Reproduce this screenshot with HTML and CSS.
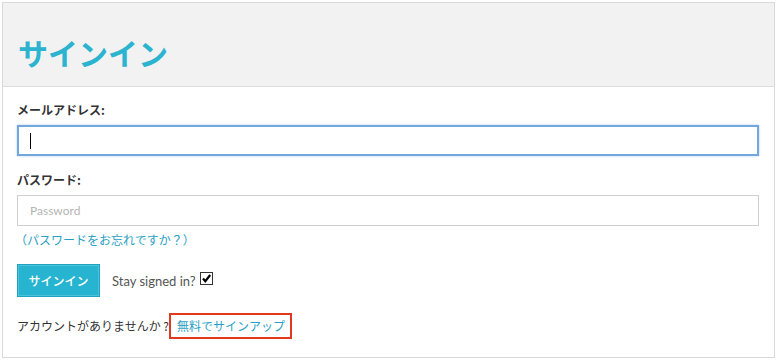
FILE: index.html
```html
<!DOCTYPE html>
<html lang="ja">
<head>
<meta charset="utf-8">
<title>サインイン</title>
<link rel="stylesheet" href="styles.css">
</head>
<body>
<div class="panel">
  <div class="panel-head">
    <h1 class="title">サインイン</h1>
  </div>
  <div class="panel-body">
    <div class="label label-first">メールアドレス:</div>
    <div class="input input-focus"><span class="caret"></span></div>
    <div class="label label-second">パスワード:</div>
    <div class="input"><span class="placeholder">Password</span></div>
    <div class="forgot"><a class="link" href="#">（パスワードをお忘れですか？）</a></div>
    <div class="actions">
      <button class="btn" type="button">サインイン</button>
      <span class="stay">Stay signed in?</span>
      <span class="check"><svg width="11" height="11" viewBox="0 0 11 11"><path d="M2 5.5 L4.3 8.3 L9.2 2" fill="none" stroke="#000" stroke-width="2.2"/></svg></span>
    </div>
    <div class="signup">
      <span class="noacc">アカウントがありませんか ?</span>
      <a class="link signup-link" href="#">無料でサインアップ</a>
    </div>
  </div>
</div>
</body>
</html>
```
FILE: styles.css
```css
html, body {
  margin: 0;
  padding: 0;
  background: #fff;
}
body {
  font-family: Lato, "Noto Sans CJK JP", sans-serif;
  color: #333;
}
.panel {
  margin: 2px 0 0 2px;
  width: 773px;
  height: 356px;
  box-sizing: border-box;
  border: 1px solid #d9d9d9;
  background: #fff;
}
.panel-head {
  height: 84px;
  background: #f2f2f2;
  border-bottom: 1px solid #dcdcdc;
  box-sizing: border-box;
  padding: 28px 0 0 15px;
}
.title {
  margin: 0;
  font-size: 30px;
  line-height: 42px;
  font-weight: 700;
  color: #2bb3cf;
  font-family: "Noto Sans CJK JP", sans-serif;
}
.panel-body {
  padding: 0 14px 0 14px;
}
.label {
  font-size: 12px;
  font-weight: 700;
  line-height: 20px;
  color: #333;
  font-family: "Noto Sans CJK JP", sans-serif;
}
.label-first { margin-top: 13px; }
.label-second { margin-top: 14px; }
.input {
  margin-top: 5px;
  width: 742px;
  height: 31px;
  box-sizing: border-box;
  border: 1px solid #cfcfcf;
  display: flex;
  align-items: center;
  padding-left: 12px;
  background: #fff;
}
.input-focus {
  border: 2px solid #72a8de;
  box-shadow: 0 0 2px rgba(114, 168, 222, 0.6);
  padding-left: 11px;
}
.caret {
  display: block;
  width: 1px;
  height: 16px;
  background: #000;
}
.placeholder {
  font-size: 12px;
  color: #b5b5b5;
  font-family: Lato, sans-serif;
}
.forgot {
  margin-top: 4px;
  line-height: 20px;
  font-size: 12px;
}
.link {
  color: #2a9fc4;
  text-decoration: none;
  font-family: "Noto Sans CJK JP", sans-serif;
}
.forgot .link {
  margin-left: -2px;
}
.actions {
  margin-top: 13px;
  display: flex;
  align-items: center;
  height: 33px;
}
.btn {
  width: 83px;
  height: 33px;
  margin: 0;
  padding: 0;
  background: #27b4d0;
  border: 1px solid #1fa3bf;
  box-shadow: inset 0 0 0 1px #4cc3da;
  color: #fff;
  font-size: 12px;
  font-family: "Noto Sans CJK JP", sans-serif;
  font-weight: 500;
}
.stay {
  margin-left: 12px;
  font-size: 13px;
  color: #555;
  font-family: Lato, sans-serif;
}
.check {
  margin-left: 4px;
  margin-top: -4px;
  width: 11px;
  height: 11px;
  border: 1px solid #333;
  background: #fff;
  display: flex;
}
.signup {
  margin-top: 16px;
  display: flex;
  align-items: center;
  height: 25px;
  font-size: 12px;
}
.noacc {
  color: #333;
  font-family: "Noto Sans CJK JP", sans-serif;
}
.signup-link {
  margin-left: 0;
  border: 2px solid #e0391f;
  height: 26px;
  box-sizing: border-box;
  padding: 0 5px 0 6px;
  display: flex;
  align-items: center;
}
```
